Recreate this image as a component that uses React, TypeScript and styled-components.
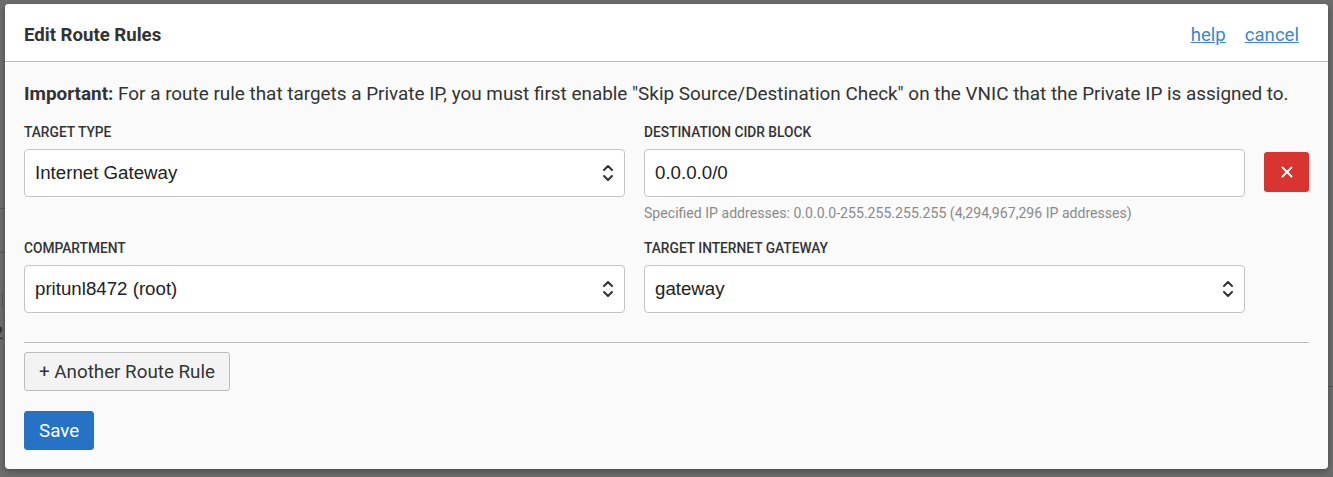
import React from "react";
import styled, { createGlobalStyle } from "styled-components";

const Global = createGlobalStyle`
  html, body { margin: 0; padding: 0; }
  body {
    background: #6d6d6d;
    font-family: Roboto, "Liberation Sans", Arial, sans-serif;
    color: #333;
  }
  * { box-sizing: border-box; }
`;

const Page = styled.div`
  position: relative;
  width: 1333px;
  height: 477px;
  overflow: hidden;
  padding: 4px 5px 0 5px;
`;

const BackLine = styled.div<{ $top: number; $left: number; $width: number; $height?: number }>`
  position: absolute;
  top: ${(p) => p.$top}px;
  left: ${(p) => p.$left}px;
  width: ${(p) => p.$width}px;
  height: ${(p) => p.$height ?? 1}px;
  background: #575757;
`;

const BackText = styled.div<{ $top: number }>`
  position: absolute;
  top: ${(p) => p.$top}px;
  left: -7px;
  font-size: 18px;
  line-height: 20px;
  color: #2b2b2b;
`;

const Modal = styled.div`
  position: relative;
  width: 1323px;
  background: #fafafa;
  border-radius: 4px;
  box-shadow: 0 2px 6px rgba(0, 0, 0, 0.35);
  overflow: hidden;
`;

const Header = styled.div`
  display: flex;
  align-items: center;
  height: 58px;
  padding: 5px 29px 0 19px;
  background: #ffffff;
  border-bottom: 1px solid #b9b9b9;
`;

const Title = styled.h1`
  flex: 1;
  margin: 0;
  font-size: 18.6px;
  font-weight: 700;
  color: #333;
`;

const HeaderLinks = styled.div`
  display: flex;
  gap: 19px;
`;

const Link = styled.a`
  font-size: 18.6px;
  color: #3b87cc;
  text-decoration: underline;
  cursor: pointer;
`;

const Body = styled.div`
  padding: 20px 19px 19px 19px;
`;

const Notice = styled.p`
  margin: 0 0 18px 0;
  font-size: 18.9px;
  line-height: 24px;
  color: #333;
  strong { font-weight: 700; }
`;

const RuleGrid = styled.div`
  display: grid;
  grid-template-columns: 601px 601px 45px;
  column-gap: 19px;
  row-gap: 0;
`;

const Field = styled.div`
  display: flex;
  flex-direction: column;
`;

const Label = styled.label`
  font-size: 13.75px;
  font-weight: 500;
  line-height: 16px;
  color: #333;
  margin-bottom: 9px;
  text-transform: uppercase;
`;

const SelectBox = styled.div`
  display: flex;
  align-items: center;
  height: 48px;
  padding: 0 10px 0 10px;
  background: #fff;
  border: 1px solid #c4c4c4;
  border-radius: 4px;
  font-family: "Liberation Sans", Arial, sans-serif;
  font-size: 18.7px;
  color: #222;
`;

const SelectText = styled.span`
  flex: 1;
`;

const InputBox = styled(SelectBox)``;

const HelpText = styled.div`
  margin-top: 8px;
  font-size: 14.1px;
  line-height: 16px;
  color: #8a8a8a;
`;

const RowSpacer = styled.div<{ $h: number }>`
  grid-column: 1 / -1;
  height: ${(p) => p.$h}px;
`;

const DeleteCell = styled.div`
  padding-top: 28px;
`;

const DeleteButton = styled.button`
  display: flex;
  align-items: center;
  justify-content: center;
  width: 45px;
  height: 40px;
  padding: 0;
  border: none;
  border-radius: 3px;
  background: #d93530;
  cursor: pointer;
`;

const Divider = styled.hr`
  margin: 29px 0 9px 0;
  border: none;
  border-top: 1px solid #bdbdbd;
`;

const Button = styled.button<{ $primary?: boolean }>`
  display: block;
  height: 39px;
  padding: 0 14px;
  font-family: inherit;
  font-size: 18.8px;
  border-radius: 3px;
  cursor: pointer;
  border: 1px solid ${(p) => (p.$primary ? "#2673c6" : "#bcbcbc")};
  background: ${(p) => (p.$primary ? "#2673c6" : "#f3f3f3")};
  color: ${(p) => (p.$primary ? "#fff" : "#333")};
`;

const Actions = styled.div`
  display: flex;
  flex-direction: column;
  align-items: flex-start;
  gap: 20px;
`;

const Chevrons = () => (
  <svg width="12" height="22" viewBox="0 0 12 22" fill="none" stroke="#333" strokeWidth="2" strokeLinecap="round" strokeLinejoin="round">
    <polyline points="2,8 6,4 10,8" />
    <polyline points="2,14 6,18 10,14" />
  </svg>
);

const Cross = () => (
  <svg width="12" height="12" viewBox="0 0 12 12" stroke="#fff" strokeWidth="1.8" strokeLinecap="round">
    <line x1="1.5" y1="1.5" x2="10.5" y2="10.5" />
    <line x1="10.5" y1="1.5" x2="1.5" y2="10.5" />
  </svg>
);

export default function App() {
  return (
    <>
      <Global />
      <Page>
        <BackLine $top={208} $left={0} $width={5} />
        <BackLine $top={252} $left={0} $width={5} />
        <BackLine $top={293} $left={2} $width={1} $height={14} />
        <BackLine $top={386} $left={1328} $width={5} />
        <BackText $top={323}>2</BackText>
        <Modal>
          <Header>
            <Title>Edit Route Rules</Title>
            <HeaderLinks>
              <Link>help</Link>
              <Link>cancel</Link>
            </HeaderLinks>
          </Header>
          <Body>
            <Notice>
              <strong>Important:</strong> For a route rule that targets a Private IP, you must first enable "Skip Source/Destination Check" on the VNIC that the Private IP is assigned to.
            </Notice>
            <RuleGrid>
              <Field>
                <Label>Target Type</Label>
                <SelectBox>
                  <SelectText>Internet Gateway</SelectText>
                  <Chevrons />
                </SelectBox>
              </Field>
              <Field>
                <Label>Destination CIDR Block</Label>
                <InputBox>
                  <SelectText>0.0.0.0/0</SelectText>
                </InputBox>
                <HelpText>Specified IP addresses: 0.0.0.0-255.255.255.255 (4,294,967,296 IP addresses)</HelpText>
              </Field>
              <DeleteCell>
                <DeleteButton aria-label="delete">
                  <Cross />
                </DeleteButton>
              </DeleteCell>
              <RowSpacer $h={19} />
              <Field>
                <Label>Compartment</Label>
                <SelectBox>
                  <SelectText>pritunl8472 (root)</SelectText>
                  <Chevrons />
                </SelectBox>
              </Field>
              <Field>
                <Label>Target Internet Gateway</Label>
                <SelectBox>
                  <SelectText>gateway</SelectText>
                  <Chevrons />
                </SelectBox>
              </Field>
            </RuleGrid>
            <Divider />
            <Actions>
              <Button>+ Another Route Rule</Button>
              <Button $primary>Save</Button>
            </Actions>
          </Body>
        </Modal>
      </Page>
    </>
  );
}
